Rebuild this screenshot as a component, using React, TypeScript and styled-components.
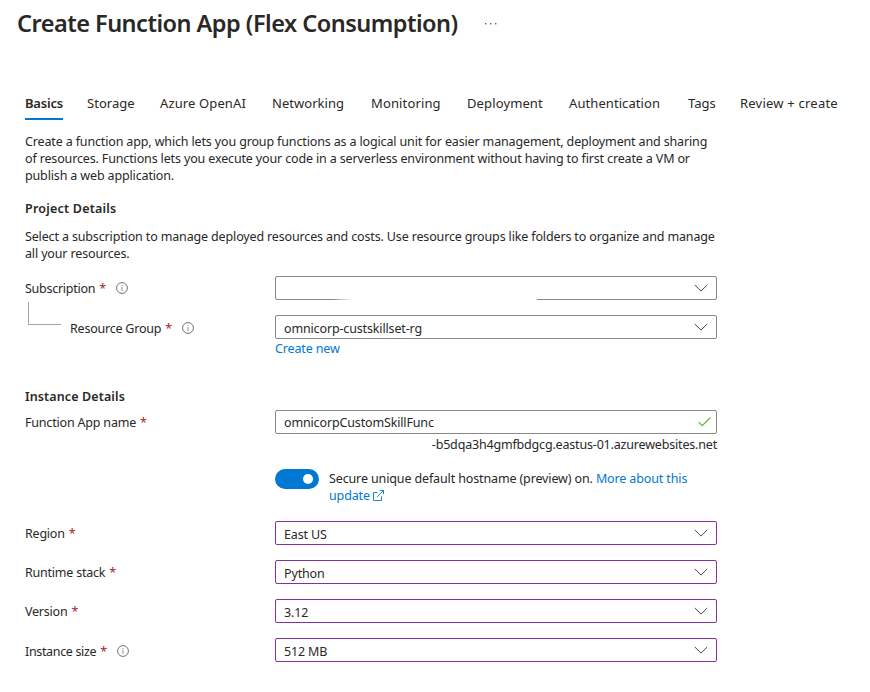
import React from 'react';
import styled, { createGlobalStyle } from 'styled-components';

const GlobalStyle = createGlobalStyle`
  * { box-sizing: border-box; }
  body {
    margin: 0;
    background: #fff;
    color: #292827;
    font: 400 12.5px/17px 'Noto Sans', 'Open Sans', sans-serif;
    letter-spacing: -0.145px;
  }
`;

const Page = styled.main`
  width: 870px;
  height: 692px;
  overflow: hidden;
`;

const Header = styled.header`
  display: flex;
  align-items: center;
  gap: 27px;
  height: 48px;
  padding-left: 17px;
`;

const Title = styled.h1`
  margin: -2px 0 0;
  font-size: 23.5px;
  line-height: 32px;
  font-weight: 600;
  letter-spacing: -0.515px;
  white-space: nowrap;
`;

const TabList = styled.nav`
  display: grid;
  grid-template-columns: 62px 73px 112px 99px 96px 102px 119px 52px 110px;
  justify-items: start;
  margin: 43px 0 0 25px;
`;

const Tab = styled.a<{ $active?: boolean; $tracking: number }>`
  height: 29px;
  padding-top: 3px;
  font-size: 13px;
  line-height: 18px;
  font-weight: ${p => (p.$active ? 600 : 400)};
  letter-spacing: ${p => p.$tracking}px;
  white-space: nowrap;
  border-bottom: 2px solid ${p => (p.$active ? '#0078d4' : 'transparent')};
`;

const Content = styled.div`
  width: 692px;
  margin: 13px 0 0 25px;
`;

const Paragraph = styled.p`
  margin: 0;
  white-space: nowrap;
`;

const SectionTitle = styled.h2<{ $top: number; $bottom: number; $tracking: number }>`
  margin: ${p => p.$top}px 0 ${p => p.$bottom}px;
  font-size: 12.5px;
  line-height: 17px;
  font-weight: 600;
  letter-spacing: ${p => p.$tracking}px;
`;

const FormRow = styled.div<{ $top?: number; $gap?: number }>`
  display: grid;
  grid-template-columns: 250px 442px;
  align-items: start;
  margin-top: ${p => p.$top ?? 0}px;
  margin-bottom: ${p => p.$gap ?? 15}px;
`;

const Label = styled.label<{ $shift?: number; $tracking?: number }>`
  display: flex;
  align-items: center;
  height: 24px;
  margin-top: ${p => p.$shift ?? 0}px;
  letter-spacing: ${p => p.$tracking ?? -0.19}px;
  white-space: nowrap;
`;

const Required = styled.span`
  margin-left: 4px;
  color: #a4262c;
`;

const InfoSvg = styled.svg`
  margin: 0 0 0 10px;
`;

const NestedLabel = styled.div`
  display: flex;
  align-items: flex-start;
`;

const Connector = styled.div`
  width: 33px;
  height: 23px;
  margin: -13px 9px 0 3px;
  border: solid #a6a5a4;
  border-width: 0 0 1px 1px;
`;

const Field = styled.div<{ $edited?: boolean; $fade?: boolean; $input?: boolean }>`
  position: relative;
  display: flex;
  align-items: center;
  justify-content: space-between;
  height: 24px;
  padding: ${p => (p.$input ? 0 : 2)}px 8px 0;
  border: 1px solid ${p => (p.$edited ? '#8a2da5' : '#8a8886')};
  border-radius: 2px;

  &::after {
    content: ${p => (p.$fade ? "''" : 'none')};
    position: absolute;
    left: 56px;
    bottom: -1px;
    width: 205px;
    height: 1px;
    background: linear-gradient(90deg, transparent, #fff 20px);
  }
`;

const ChevronSvg = styled.svg`
  margin-top: -2px;
`;

const CheckSvg = styled.svg`
  margin-right: -3px;
`;

const Link = styled.a`
  color: #0078d4;
`;

const CreateNew = styled(Link)`
  display: block;
  margin-top: 1px;
  letter-spacing: -0.14px;
`;

const HostSuffix = styled.div`
  margin-top: 2px;
  text-align: right;
  letter-spacing: -0.18px;
`;

const ToggleRow = styled.div`
  display: flex;
  align-items: flex-start;
  gap: 10px;
  margin-top: 16px;
`;

const Switch = styled.button`
  display: flex;
  justify-content: flex-end;
  align-items: center;
  width: 44px;
  height: 20px;
  padding: 0 6px;
  border: 0;
  border-radius: 10px;
  background: #0078d4;
`;

const Knob = styled.span`
  width: 10px;
  height: 10px;
  border-radius: 50%;
  background: #fff;
`;

const ToggleText = styled.div`
  margin-top: 1px;
  letter-spacing: -0.13px;
  white-space: nowrap;
`;

const ExternalWrap = styled.span`
  display: inline-flex;
  margin-left: 3px;
  vertical-align: -1px;
`;

const MoreIcon = () => (
  <svg width="12" height="4" viewBox="0 0 12 4" fill="#605e5c">
    <rect x="0" y="1" width="1.4" height="1.4" />
    <rect x="5" y="1" width="1.4" height="1.4" />
    <rect x="10" y="1" width="1.4" height="1.4" />
  </svg>
);

const InfoIcon = () => (
  <InfoSvg width="12" height="12" viewBox="0 0 12 12" fill="none" stroke="#75736f">
    <circle cx="6" cy="6" r="5.4" strokeWidth="1" />
    <path d="M6 5V9M6 3v1" stroke="#8f8d8a" strokeWidth="1" />
  </InfoSvg>
);

const Chevron = () => (
  <ChevronSvg width="14" height="8" viewBox="0 0 14 8" fill="none" stroke="#484644" strokeWidth="1">
    <path d="M.8 1 7 7.1 13.2 1" />
  </ChevronSvg>
);

const Check = () => (
  <CheckSvg width="13" height="10" viewBox="0 0 13 10" fill="none" stroke="#6bb02c" strokeWidth="1.2">
    <path d="M.7 5.1 4.2 8.6 12.2 .7" />
  </CheckSvg>
);

const ExternalIcon = () => (
  <svg width="11" height="11" viewBox="0 0 11 11" fill="none" stroke="#0078d4" strokeWidth=".9">
    <path d="M4.5 2.5h-4v8h8V6.3M6.8 .5h3.7v3.7M10.3 .7 4.2 6.8" />
  </svg>
);

const tabs = [
  { name: 'Basics', tracking: -0.2 },
  { name: 'Storage', tracking: 0.04 },
  { name: 'Azure OpenAI', tracking: 0.12 },
  { name: 'Networking', tracking: 0.04 },
  { name: 'Monitoring', tracking: 0.14 },
  { name: 'Deployment', tracking: 0.12 },
  { name: 'Authentication', tracking: 0.08 },
  { name: 'Tags', tracking: 0 },
  { name: 'Review + create', tracking: 0.22 },
];

const selects = [
  { label: 'Region', value: 'East US', shift: 0, info: false },
  { label: 'Runtime stack', value: 'Python', shift: 0, info: false },
  { label: 'Version', value: '3.12', shift: 0, info: false },
  { label: 'Instance size', value: '512 MB', shift: 1, info: true },
];

export default function App() {
  return (
    <Page>
      <GlobalStyle />
      <Header>
        <Title>Create Function App (Flex Consumption)</Title>
        <MoreIcon />
      </Header>
      <TabList>
        {tabs.map((tab, i) => (
          <Tab key={tab.name} $active={i === 0} $tracking={tab.tracking}>{tab.name}</Tab>
        ))}
      </TabList>
      <Content>
        <Paragraph>
          Create a function app, which lets you group functions as a logical unit for easier management, deployment and sharing<br />
          of resources. Functions lets you execute your code in a serverless environment without having to first create a VM or<br />
          publish a web application.
        </Paragraph>
        <SectionTitle $top={16} $bottom={11} $tracking={0.22}>Project Details</SectionTitle>
        <Paragraph>
          Select a subscription to manage deployed resources and costs. Use resource groups like folders to organize and manage<br />
          all your resources.
        </Paragraph>
        <FormRow $top={14}>
          <Label $tracking={-0.26}>Subscription<Required>*</Required><InfoIcon /></Label>
          <Field $fade><span /><Chevron /></Field>
        </FormRow>
        <FormRow $gap={31}>
          <NestedLabel>
            <Connector />
            <Label $shift={1} $tracking={-0.22}>Resource Group<Required>*</Required><InfoIcon /></Label>
          </NestedLabel>
          <div>
            <Field>omnicorp-custskillset-rg<Chevron /></Field>
            <CreateNew>Create new</CreateNew>
          </div>
        </FormRow>
        <SectionTitle $top={0} $bottom={5} $tracking={0.12}>Instance Details</SectionTitle>
        <FormRow $gap={17}>
          <Label>Function App name<Required>*</Required></Label>
          <div>
            <Field $input>omnicorpCustomSkillFunc<Check /></Field>
            <HostSuffix>-b5dqa3h4gmfbdgcg.eastus-01.azurewebsites.net</HostSuffix>
            <ToggleRow>
              <Switch role="switch" aria-checked="true"><Knob /></Switch>
              <ToggleText>
                Secure unique default hostname (preview) on. <Link>More about this<br />update<ExternalWrap><ExternalIcon /></ExternalWrap></Link>
              </ToggleText>
            </ToggleRow>
          </div>
        </FormRow>
        {selects.map(s => (
          <FormRow key={s.label}>
            <Label $shift={s.shift} $tracking={s.info ? -0.34 : -0.22}>
              {s.label}<Required>*</Required>{s.info && <InfoIcon />}
            </Label>
            <Field $edited>{s.value}<Chevron /></Field>
          </FormRow>
        ))}
      </Content>
    </Page>
  );
}
